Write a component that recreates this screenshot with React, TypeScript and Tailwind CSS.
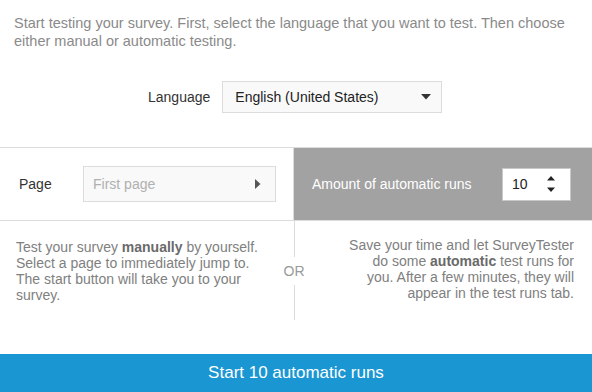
import React from 'react';

function CaretDown() {
  return (
    <svg width="10" height="6" viewBox="0 0 10 6" className="shrink-0">
      <path d="M0 0 H10 L5 5.5 Z" fill="#333" />
    </svg>
  );
}

function CaretRight() {
  return (
    <svg width="6" height="10" viewBox="0 0 6 10" className="shrink-0">
      <path d="M0 0 V10 L5.5 5 Z" fill="#555" />
    </svg>
  );
}

function Spinner() {
  return (
    <svg width="10" height="18" viewBox="0 0 10 18" className="shrink-0">
      <path d="M1 5.5 L5 1 L9 5.5 Z" fill="#222" />
      <path d="M1 12.5 L9 12.5 L5 17 Z" fill="#222" />
    </svg>
  );
}

export default function App() {
  return (
    <div className="flex h-[392px] w-[592px] flex-col bg-white font-[family-name:'Liberation_Sans',Arial,sans-serif] text-[14px]">
      {/* Intro */}
      <p className="px-[14px] pt-[14px] text-[14.5px] leading-[18px] text-[#8a8a8a]">
        Start testing your survey. First, select the language that you want to test. Then choose
        either manual or automatic testing.
      </p>

      {/* Language picker */}
      <div className="mt-[31px] flex items-center pl-[148px]">
        <span className="text-[#333]">Language</span>
        <div className="ml-[12px] flex h-[32px] w-[220px] items-center justify-between border border-[#dcdcdc] bg-[#f9f9f9] pl-[12px] pr-[10px] text-[#222]">
          <span>English (United States)</span>
          <CaretDown />
        </div>
      </div>

      {/* Manual / automatic row */}
      <div className="mt-[34px] flex h-[74px] border-y border-[#dcdcdc]">
        <div className="flex w-[294px] items-center border-r border-[#dcdcdc] pl-[19px]">
          <span className="w-[64px] text-[#333]">Page</span>
          <div className="flex h-[36px] w-[193px] items-center justify-between border border-[#dcdcdc] bg-[#f9f9f9] pl-[9px] pr-[14px] text-[#b0b0b0]">
            <span>First page</span>
            <CaretRight />
          </div>
        </div>
        <div className="flex flex-1 items-center bg-[#a2a2a2] pl-[18px]">
          <span className="w-[190px] text-white">Amount of automatic runs</span>
          <div className="flex h-[33px] w-[69px] items-center justify-between border border-[#c8c8c8] bg-white pl-[9px] pr-[14px] text-[#222]">
            <span>10</span>
            <Spinner />
          </div>
        </div>
      </div>

      {/* Descriptions */}
      <div className="flex flex-1">
        <div className="w-[278px] pl-[16px] pr-[10px] pt-[18px] leading-[16px] text-[#808080]">
          Test your survey <b className="font-bold text-[#6a6a6a]">manually</b> by yourself. Select a
          page to immediately jump to. The start button will take you to your survey.
        </div>
        <div className="flex w-[32px] flex-col items-center">
          <div className="h-[36px] w-px bg-[#dcdcdc]" />
          <div className="flex h-[28px] items-center text-[#999]">OR</div>
          <div className="h-[35px] w-px bg-[#dcdcdc]" />
        </div>
        <div className="w-[282px] pl-[36px] pr-[18px] pt-[16px] text-right leading-[16px] text-[#808080]">
          Save your time and let SurveyTester do some{' '}
          <b className="font-bold text-[#6a6a6a]">automatic</b> test runs for you. After a few
          minutes, they will appear in the test runs tab.
        </div>
      </div>

      {/* Start button */}
      <button className="flex h-[38px] w-full items-center justify-center bg-[#1a96d2] text-[17px] text-white">
        Start 10 automatic runs
      </button>
    </div>
  );
}
